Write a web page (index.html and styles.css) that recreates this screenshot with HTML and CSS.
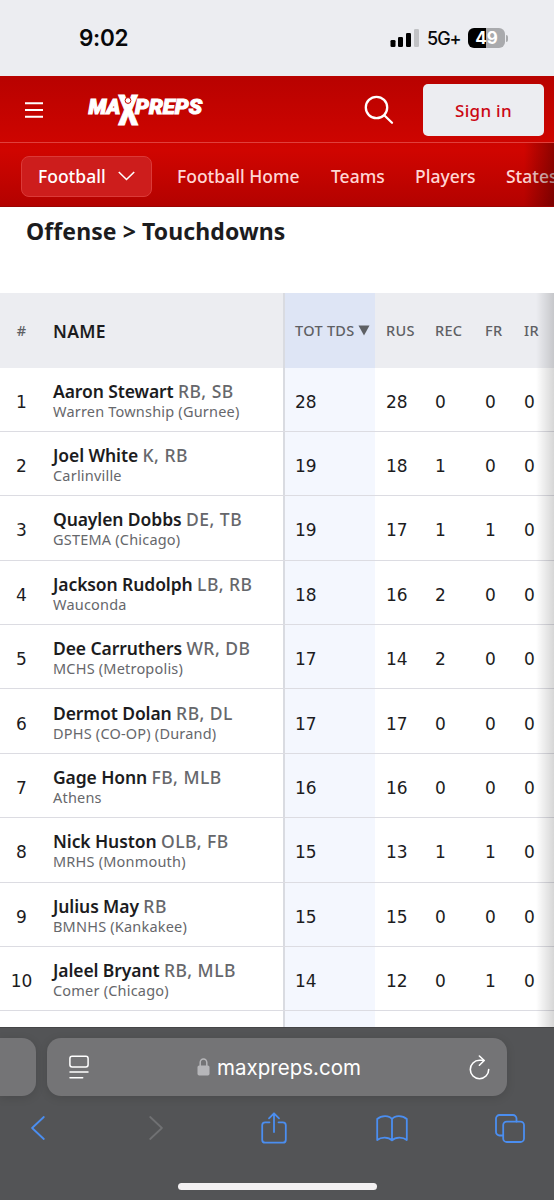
FILE: index.html
```html
<!DOCTYPE html>
<html lang="en">
<head>
    <meta charset="UTF-8">
    <title>Touchdowns - MaxPreps</title>
    <link rel="stylesheet" href="styles.css">
</head>
<body>
    <div class="phone">
        <div class="status">
            <span class="clock">9:02</span>
            <div class="status-right">
                <svg class="signal" width="29" height="18" viewBox="0 0 29 18">
                    <rect x="0.5" y="11" width="5" height="7" rx="1.3"/>
                    <rect x="8" y="8" width="5" height="10" rx="1.3"/>
                    <rect x="16" y="4" width="5" height="14" rx="1.3"/>
                    <rect x="24" y="0" width="5" height="18" rx="1.3" fill="#c1c2c5"/>
                </svg>
                <span class="network">5G+</span>
                <span class="battery">49</span>
                <span class="battery-tip"></span>
            </div>
        </div>

        <header>
            <div class="topbar">
                <svg class="menu" width="20" height="18" viewBox="0 0 20 18" stroke="#fff" stroke-width="1.9">
                    <path d="M1 2.3h18M1 9h18M1 15.8h18"/>
                </svg>
                <svg class="logo" width="118" height="60" viewBox="0 -12 118 60">
                    <text x="1.5" y="21.5" textLength="32" lengthAdjust="spacingAndGlyphs">MA</text>
                    <text x="48" y="21.5" textLength="67" lengthAdjust="spacingAndGlyphs">PREPS</text>
                    <text class="logo-x" transform="translate(31.3 33) scale(.72 1)">X</text>
                    <circle cx="41" cy="8.5" r="2.9" fill="#fff" stroke="#c60400" stroke-width="1"/>
                </svg>
                <svg class="search" width="30" height="30" viewBox="0 0 30 30" fill="none" stroke="#fff" stroke-width="2.3" stroke-linecap="round">
                    <circle cx="12.5" cy="12.5" r="10.7"/>
                    <path d="M20.5 20.5l7.5 7.3"/>
                </svg>
                <a class="signin" href="#">Sign in</a>
            </div>
            <nav>
                <a class="sport" href="#">Football
                    <svg width="17" height="10" viewBox="0 0 17 10" fill="none" stroke="#fff" stroke-width="1.6"><path d="M.8 1l7.7 7.5L16.2 1"/></svg>
                </a>
                <a class="link home" href="#">Football Home</a>
                <a class="link teams" href="#">Teams</a>
                <a class="link players" href="#">Players</a>
                <a class="link" href="#">States</a>
            </nav>
        </header>

        <main>
            <h1>Offense &gt; Touchdowns</h1>
            <div class="stats">
                <div class="row head">
                    <span class="rank">#</span><span class="name">NAME</span><span class="tot">TOT TDS <svg width="12" height="11" viewBox="0 0 12 11"><path d="M.5.5h11L6 10.5z" fill="#5e6064"/></svg></span><span>RUS</span><span>REC</span><span>FR</span><span>IR</span>
                </div>
                <div class="row">
                    <span class="rank">1</span><div class="name"><b>Aaron Stewart <i>RB, SB</i></b><small>Warren Township (Gurnee)</small></div><span class="tot">28</span><span>28</span><span>0</span><span>0</span><span>0</span>
                </div>
                <div class="row">
                    <span class="rank">2</span><div class="name"><b>Joel White <i>K, RB</i></b><small>Carlinville</small></div><span class="tot">19</span><span>18</span><span>1</span><span>0</span><span>0</span>
                </div>
                <div class="row">
                    <span class="rank">3</span><div class="name"><b>Quaylen Dobbs <i>DE, TB</i></b><small>GSTEMA (Chicago)</small></div><span class="tot">19</span><span>17</span><span>1</span><span>1</span><span>0</span>
                </div>
                <div class="row">
                    <span class="rank">4</span><div class="name"><b>Jackson Rudolph <i>LB, RB</i></b><small>Wauconda</small></div><span class="tot">18</span><span>16</span><span>2</span><span>0</span><span>0</span>
                </div>
                <div class="row">
                    <span class="rank">5</span><div class="name"><b>Dee Carruthers <i>WR, DB</i></b><small>MCHS (Metropolis)</small></div><span class="tot">17</span><span>14</span><span>2</span><span>0</span><span>0</span>
                </div>
                <div class="row">
                    <span class="rank">6</span><div class="name"><b>Dermot Dolan <i>RB, DL</i></b><small>DPHS (CO-OP) (Durand)</small></div><span class="tot">17</span><span>17</span><span>0</span><span>0</span><span>0</span>
                </div>
                <div class="row">
                    <span class="rank">7</span><div class="name"><b>Gage Honn <i>FB, MLB</i></b><small>Athens</small></div><span class="tot">16</span><span>16</span><span>0</span><span>0</span><span>0</span>
                </div>
                <div class="row">
                    <span class="rank">8</span><div class="name"><b>Nick Huston <i>OLB, FB</i></b><small>MRHS (Monmouth)</small></div><span class="tot">15</span><span>13</span><span>1</span><span>1</span><span>0</span>
                </div>
                <div class="row">
                    <span class="rank">9</span><div class="name"><b>Julius May <i>RB</i></b><small>BMNHS (Kankakee)</small></div><span class="tot">15</span><span>15</span><span>0</span><span>0</span><span>0</span>
                </div>
                <div class="row">
                    <span class="rank">10</span><div class="name"><b>Jaleel Bryant <i>RB, MLB</i></b><small>Comer (Chicago)</small></div><span class="tot">14</span><span>12</span><span>0</span><span>1</span><span>0</span>
                </div>
                <div class="row">
                    <span class="rank"></span><div class="name"></div><span class="tot"></span>
                </div>
            </div>
        </main>

        <footer>
            <div class="tabs">
                <div class="prev-tab"></div>
                <div class="address">
                    <svg class="reader" width="20" height="25" viewBox="0 0 20 25" fill="none" stroke="#fff" stroke-width="1.5" stroke-linecap="round">
                        <rect x=".9" y="1.3" width="18.2" height="10.7" rx="2.2"/>
                        <path d="M1 17h18M1 22.8h12.7"/>
                    </svg>
                    <div class="url">
                        <svg width="13" height="18" viewBox="0 0 13 18">
                            <path d="M3.2 8V4.6a3.3 3.6 0 0 1 6.6 0V8" fill="none" stroke="#b6b6b9" stroke-width="1.5"/>
                            <rect x=".5" y="7.4" width="12" height="10" rx="1.7" fill="#b6b6b9"/>
                        </svg>
                        <span>maxpreps.com</span>
                    </div>
                    <svg class="reload" width="21" height="25" viewBox="0 0 21 25" fill="none" stroke="#fff" stroke-width="1.6" stroke-linecap="round" stroke-linejoin="round">
                        <path d="M19.7 14.5A9.2 9.2 0 1 1 10.500 5.300h4"/>
                        <path d="M10.4 1l4.8 4.500-4.800 4.700"/>
                    </svg>
                </div>
            </div>
            <div class="toolbar">
                <svg width="32" height="24" viewBox="0 0 15 24"><path d="M13.3 1L1.6 12l11.7 11"/></svg>
                <svg class="disabled" width="32" height="24" viewBox="0 0 15 24"><path d="M1.7 1l11.7 11L1.7 23"/></svg>
                <svg width="32" height="32" viewBox="0 0 26 32"><path d="M8.5 10.3H4.2A3 3 0 0 0 1.2 13.3v14.4a3 3 0 0 0 3 3h17.6a3 3 0 0 0 3-3V13.3a3 3 0 0 0-3-3h-4.3M13 20V1.5M8 6.3l5-5 5 5"/></svg>
                <svg width="32" height="27" viewBox="0 0 32 27"><path d="M16 4.2C13.5.3 5.5.2 1.2 4V25C5 21.8 12.5 21.8 16 25.3C19.5 21.8 27 21.8 30.8 25V4C26.5.2 18.5.3 16 4.2V25"/></svg>
                <svg width="32" height="29" viewBox="0 0 30 29"><rect x="8.2" y="7.6" width="20.8" height="20.4" rx="3.5"/><path d="M8 21.5H4.5A3.5 3.5 0 0 1 1 18V4.5A3.5 3.5 0 0 1 4.5 1H18a3.5 3.5 0 0 1 3.5 3.5v3"/></svg>
            </div>
            <div class="home-bar"></div>
        </footer>
    </div>
</body>
</html>
```
FILE: styles.css
```css
* {
    box-sizing: border-box;
}
body {
    margin: 0;
    font-family: "Noto Sans", sans-serif;
    color: #1c1c1e;
    background-color: #fff;
}
a {
    text-decoration: none;
}
.phone {
    width: 554px;
    height: 1200px;
    overflow: hidden;
    display: flex;
    flex-direction: column;
}

/* status bar */
.status {
    height: 76px;
    flex: none;
    background-color: #ecedf1;
    display: flex;
    justify-content: space-between;
    padding: 0 46px 0 79px;
    font-family: Inter, sans-serif;
    color: #08080a;
}
.clock {
    font-size: 22.5px;
    font-weight: 600;
    line-height: 76px;
    letter-spacing: -0.3px;
}
.status-right {
    display: flex;
    align-items: center;
}
.signal {
    margin-right: 8px;
}
.network {
    font-size: 18px;
    font-weight: 500;
    letter-spacing: -1px;
    width: 41px;
}
.battery {
    width: 37px;
    height: 20px;
    border-radius: 6px;
    background: linear-gradient(to right, #000 50%, #a9aaad 50%);
    color: #fff;
    font-size: 17px;
    font-weight: 700;
    line-height: 20px;
    text-align: center;
}
.battery-tip {
    width: 2px;
    height: 7px;
    margin-left: 1px;
    border-radius: 0 2px 2px 0;
    background-color: #a9aaad;
}

/* site header */
header {
    height: 131px;
    flex: none;
    background: linear-gradient(#b80200, #c90400 40%, #d00500 57%, #b30200);
    border-bottom: 1px solid #9c0402;
}
.topbar {
    height: 67px;
    display: flex;
    align-items: center;
    padding: 1px 10px 0 24px;
    border-bottom: 1px solid #e0403c;
}
.logo {
    margin-left: 43px;
    fill: #fff;
    stroke: #fff;
    stroke-width: 1px;
    font-family: Roboto, sans-serif;
    font-weight: 900;
    font-style: italic;
    font-size: 19.5px;
}
.logo-x {
    font-size: 43px;
    font-style: normal;
}
.search {
    margin-left: 159px;
}
.signin {
    width: 121px;
    height: 52px;
    margin-left: auto;
    border-radius: 5px;
    background-color: #ecedf1;
    color: #cb0713;
    font-size: 17px;
    font-weight: 500;
    line-height: 54px;
    text-align: center;
    letter-spacing: 0.3px;
}
nav {
    height: 63px;
    display: flex;
    align-items: center;
    padding: 3px 0 0 21px;
    position: relative;
    overflow: hidden;
    white-space: nowrap;
    font-size: 17.5px;
    font-weight: 500;
}
nav::after {
    content: "";
    position: absolute;
    top: 0;
    right: 0;
    bottom: 0;
    width: 30px;
    background: linear-gradient(to right, transparent, rgba(40, 0, 0, 0.4));
}
.sport {
    flex: none;
    width: 131px;
    height: 41px;
    margin-right: 25px;
    padding: 0 16px 0 16px;
    display: flex;
    align-items: center;
    justify-content: space-between;
    border: 1px solid #db3a38;
    border-radius: 8px;
    background-color: #cd1d1c;
    color: #fff;
}
.link {
    flex: none;
    color: #ffd6d4;
}
.home {
    width: 154px;
}
.teams {
    width: 84px;
}
.players {
    width: 91px;
}

/* stats table */
main {
    height: 820px;
    flex: none;
    position: relative;
    overflow: hidden;
}
main::after {
    content: "";
    position: absolute;
    top: 86px;
    right: 0;
    bottom: 0;
    width: 18px;
    background: linear-gradient(to right, transparent, rgba(0, 0, 0, 0.16));
}
h1 {
    height: 86px;
    margin: 0;
    padding: 8px 26px;
    font-size: 23px;
    line-height: 32px;
    font-weight: 700;
    letter-spacing: 0.1px;
}
.row {
    display: grid;
    grid-template-columns: 53px 230px 103px 49px 50px 39px 30px;
    height: 64.4px;
    align-items: center;
    border-bottom: 1.5px solid #dcdce2;
    font-family: "DejaVu Sans", sans-serif;
    font-size: 17px;
    white-space: nowrap;
}
.rank {
    padding-right: 10px;
    text-align: center;
}
.name {
    font-family: "Noto Sans", sans-serif;
}
.name b, .name small {
    display: block;
}
.name b {
    font-size: 17.5px;
    font-weight: 600;
    line-height: 20px;
    margin-top: 3px;
    letter-spacing: -0.1px;
}
.name i {
    font-style: normal;
    font-weight: 500;
    letter-spacing: 0.5px;
    color: #66676b;
}
.name small {
    font-size: 14.5px;
    line-height: 20px;
    letter-spacing: 0.2px;
    color: #66676b;
}
.tot {
    align-self: stretch;
    width: 92px;
    padding-left: 10px;
    display: flex;
    align-items: center;
    border-left: 2px solid #d9dbe1;
    background-color: #f4f7fe;
}
.row > span {
    padding-top: 5px;
}
.head {
    height: 74.5px;
    border: 0;
    background-color: #ecedf1;
    font-family: "Noto Sans", sans-serif;
    font-size: 14.5px;
    font-weight: 500;
    letter-spacing: 0.3px;
    color: #5e6064;
}
.row.head > span {
    padding-top: 0;
}
.row.head > .name {
    padding-top: 1px;
    font-size: 17.5px;
    font-weight: 600;
    color: #1c1c1e;
}
.head .tot {
    gap: 3px;
    background-color: #dee5f5;
}

/* browser chrome */
footer {
    flex: 1;
    background-color: #535456;
    border-top: 1px solid #454547;
}
.tabs {
    display: flex;
    justify-content: flex-start;
    gap: 11px;
    padding-top: 10px;
}
.prev-tab, .address {
    height: 58px;
    background-color: #747476;
    box-shadow: 0 2px 10px rgba(0, 0, 0, 0.12);
}
.prev-tab {
    width: 36px;
    border-radius: 0 14px 14px 0;
}
.address {
    width: 460px;
    padding: 0 17px 0 22px;
    display: flex;
    align-items: center;
    justify-content: space-between;
    border-radius: 14px;
}
.url {
    display: flex;
    align-items: center;
    gap: 7px;
    color: #fff;
    font-family: Inter, sans-serif;
    font-size: 20.5px;
}
.toolbar {
    height: 64px;
    padding-left: 22px;
    display: flex;
    align-items: center;
    gap: 86px;
}
.toolbar svg {
    fill: none;
    stroke: #4b8ef0;
    stroke-width: 1.8px;
    stroke-linecap: round;
    stroke-linejoin: round;
}
.toolbar .disabled {
    stroke: #707173;
}
.home-bar {
    width: 199px;
    height: 7px;
    margin: 23px auto 0;
    border-radius: 4px;
    background-color: #f3f1f2;
}
```
